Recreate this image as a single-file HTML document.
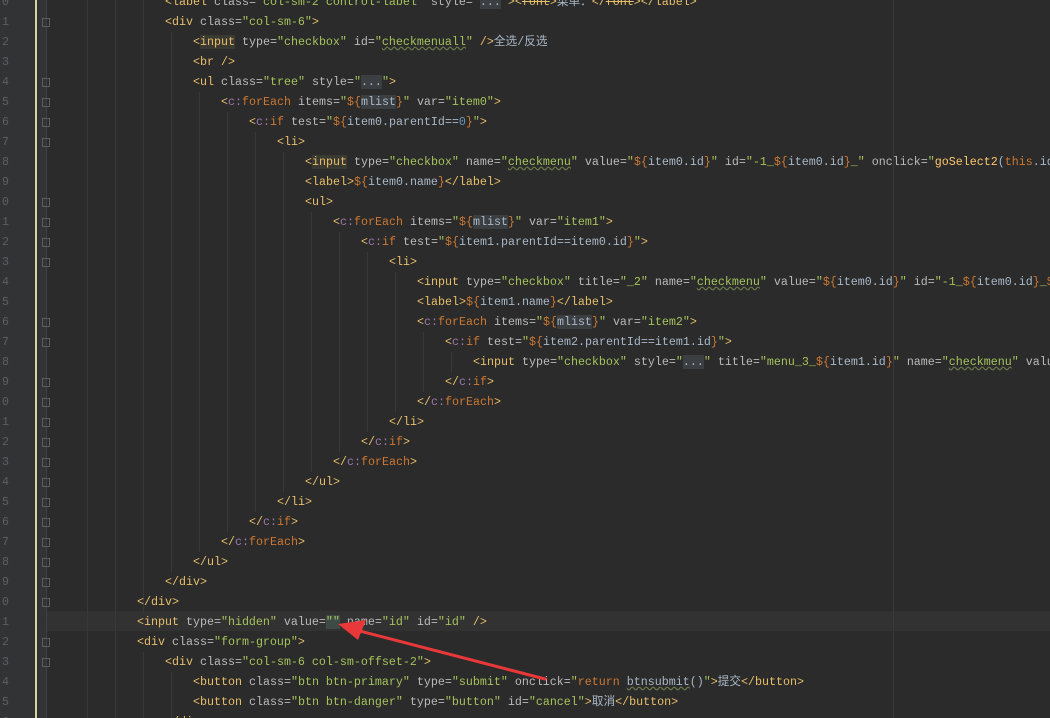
<!DOCTYPE html>
<html><head><meta charset="utf-8"><style>
html,body{margin:0;padding:0;background:#2b2b2b;width:1050px;height:718px;overflow:hidden}
#w{position:relative;width:1050px;height:718px;overflow:hidden}
#g{position:absolute;left:0;top:0;width:35px;height:718px;background:#313335}
#y{position:absolute;left:35px;top:0;width:2px;height:718px;background:#d6d69c}
#g2{position:absolute;left:37px;top:0;width:9px;height:718px;background:#313335;border-right:1px solid #3e4042}
.ln{position:absolute;left:2px;font:11.67px "Liberation Mono",monospace;color:#5c6064;height:20px;line-height:20px}
.l{position:absolute;white-space:pre;font:11.67px "Liberation Mono","Noto Sans CJK SC",monospace;height:20px;line-height:20px;color:#bababa}
.gd{position:absolute;width:1px;background:#383838}
.t{color:#e8bf6a}.a{color:#bababa}.s{color:#a5c25c}.e{color:#cc7832}.v{color:#a9b7c6}.p{color:#9876aa}.k{color:#cc7832}.n{color:#6897bb}.z{color:#a9b7c6}.f{color:#ffc66d}
.hb{background:#3b3a32}.hm{background:#3c3f41}.u{text-decoration:underline wavy #6a7a4a}
#cur{position:absolute;left:47px;top:611px;width:1003px;height:20px;background:#323232}
#rm{position:absolute;left:893px;top:0;width:1px;height:718px;background:#3a3a3a}
.fd{position:absolute;left:42px;width:6px;height:7px;border:1px solid #5a5d60}
</style></head><body><div id="w">
<div id="cur"></div>
<div id="rm"></div>
<div id="g"></div><div id="y"></div><div id="g2"></div>
<div class="gd" style="left:87px;top:0;height:718px"></div>
<div class="gd" style="left:115px;top:0;height:718px"></div>
<div class="gd" style="left:143px;top:0;height:612px"></div>
<div class="gd" style="left:171px;top:32px;height:540px"></div>
<div class="gd" style="left:199px;top:92px;height:460px"></div>
<div class="gd" style="left:227px;top:112px;height:420px"></div>
<div class="gd" style="left:255px;top:132px;height:380px"></div>
<div class="gd" style="left:283px;top:152px;height:340px"></div>
<div class="gd" style="left:311px;top:212px;height:260px"></div>
<div class="gd" style="left:339px;top:232px;height:220px"></div>
<div class="gd" style="left:367px;top:252px;height:180px"></div>
<div class="gd" style="left:395px;top:272px;height:140px"></div>
<div class="gd" style="left:423px;top:332px;height:60px"></div>
<div class="gd" style="left:451px;top:352px;height:20px"></div>
<div class="gd" style="left:143px;top:652px;height:66px"></div>
<div class="gd" style="left:171px;top:672px;height:46px"></div>

<div class="ln" style="top:-8px">0</div><div class="ln" style="top:12px">1</div><div class="ln" style="top:32px">2</div><div class="ln" style="top:52px">3</div><div class="ln" style="top:72px">4</div><div class="ln" style="top:92px">5</div><div class="ln" style="top:112px">6</div><div class="ln" style="top:132px">7</div><div class="ln" style="top:152px">8</div><div class="ln" style="top:172px">9</div><div class="ln" style="top:192px">0</div><div class="ln" style="top:212px">1</div><div class="ln" style="top:232px">2</div><div class="ln" style="top:252px">3</div><div class="ln" style="top:272px">4</div><div class="ln" style="top:292px">5</div><div class="ln" style="top:312px">6</div><div class="ln" style="top:332px">7</div><div class="ln" style="top:352px">8</div><div class="ln" style="top:372px">9</div><div class="ln" style="top:392px">0</div><div class="ln" style="top:412px">1</div><div class="ln" style="top:432px">2</div><div class="ln" style="top:452px">3</div><div class="ln" style="top:472px">4</div><div class="ln" style="top:492px">5</div><div class="ln" style="top:512px">6</div><div class="ln" style="top:532px">7</div><div class="ln" style="top:552px">8</div><div class="ln" style="top:572px">9</div><div class="ln" style="top:592px">0</div><div class="ln" style="top:612px">1</div><div class="ln" style="top:632px">2</div><div class="ln" style="top:652px">3</div><div class="ln" style="top:672px">4</div><div class="ln" style="top:692px">5</div><div class="ln" style="top:712px">6</div>

<div class="fd" style="top:18px"></div><div class="fd" style="top:78px"></div><div class="fd" style="top:98px"></div><div class="fd" style="top:118px"></div><div class="fd" style="top:138px"></div><div class="fd" style="top:198px"></div><div class="fd" style="top:218px"></div><div class="fd" style="top:238px"></div><div class="fd" style="top:258px"></div><div class="fd" style="top:318px"></div><div class="fd" style="top:338px"></div><div class="fd" style="top:378px"></div><div class="fd" style="top:398px"></div><div class="fd" style="top:418px"></div><div class="fd" style="top:438px"></div><div class="fd" style="top:458px"></div><div class="fd" style="top:478px"></div><div class="fd" style="top:498px"></div><div class="fd" style="top:518px"></div><div class="fd" style="top:538px"></div><div class="fd" style="top:558px"></div><div class="fd" style="top:578px"></div><div class="fd" style="top:598px"></div><div class="fd" style="top:638px"></div><div class="fd" style="top:658px"></div>

<div class="l" style="left:165px;top:-8px"><span class="t">&lt;label </span><span class="a">class=</span><span class="s">"col-sm-2 control-label"</span> <span class="a">style=</span><span class="s">"</span><span class="hm z">...</span><span class="s">"</span><span class="t">&gt;&lt;<s>font</s>&gt;</span><span class="z">菜单：</span><span class="t">&lt;/<s>font</s>&gt;&lt;/label&gt;</span></div>
<div class="l" style="left:165px;top:12px"><span class="t">&lt;div </span><span class="a">class=</span><span class="s">"col-sm-6"</span><span class="t">&gt;</span></div>
<div class="l" style="left:193px;top:32px"><span class="t">&lt;<span class="hb">input</span> </span><span class="a">type=</span><span class="s">"checkbox"</span> <span class="a">id=</span><span class="s">"<span class="u">checkmenuall</span>"</span> <span class="t">/&gt;</span><span class="z">全选/反选</span></div>
<div class="l" style="left:193px;top:52px"><span class="t">&lt;br /&gt;</span></div>
<div class="l" style="left:193px;top:72px"><span class="t">&lt;ul </span><span class="a">class=</span><span class="s">"tree"</span> <span class="a">style=</span><span class="s">"</span><span class="hm z">...</span><span class="s">"</span><span class="t">&gt;</span></div>
<div class="l" style="left:221px;top:92px"><span class="t">&lt;</span><span class="p">c:</span><span class="k">forEach</span> <span class="a">items=</span><span class="s">"</span><span class="e">${</span><span class="v hm">mlist</span><span class="e">}</span><span class="s">"</span> <span class="a">var=</span><span class="s">"item0"</span><span class="t">&gt;</span></div>
<div class="l" style="left:249px;top:112px"><span class="t">&lt;</span><span class="p">c:</span><span class="k">if</span> <span class="a">test=</span><span class="s">"</span><span class="e">${</span><span class="v">item0.parentId==</span><span class="n">0</span><span class="e">}</span><span class="s">"</span><span class="t">&gt;</span></div>
<div class="l" style="left:277px;top:132px"><span class="t">&lt;li&gt;</span></div>
<div class="l" style="left:305px;top:152px"><span class="t">&lt;<span class="hb">input</span> </span><span class="a">type=</span><span class="s">"checkbox"</span> <span class="a">name=</span><span class="s">"<span class="u">checkmenu</span>"</span> <span class="a">value=</span><span class="s">"</span><span class="e">${</span><span class="v">item0.id</span><span class="e">}</span><span class="s">"</span> <span class="a">id=</span><span class="s">"-1_</span><span class="e">${</span><span class="v">item0.id</span><span class="e">}</span><span class="s">_"</span> <span class="a">onclick=</span><span class="s">"</span><span class="f">goSelect2</span><span class="z">(</span><span class="k">this</span><span class="z">.id)"</span></div>
<div class="l" style="left:305px;top:172px"><span class="t">&lt;label&gt;</span><span class="e">${</span><span class="v">item0.name</span><span class="e">}</span><span class="t">&lt;/label&gt;</span></div>
<div class="l" style="left:305px;top:192px"><span class="t">&lt;ul&gt;</span></div>
<div class="l" style="left:333px;top:212px"><span class="t">&lt;</span><span class="p">c:</span><span class="k">forEach</span> <span class="a">items=</span><span class="s">"</span><span class="e">${</span><span class="v hm">mlist</span><span class="e">}</span><span class="s">"</span> <span class="a">var=</span><span class="s">"item1"</span><span class="t">&gt;</span></div>
<div class="l" style="left:361px;top:232px"><span class="t">&lt;</span><span class="p">c:</span><span class="k">if</span> <span class="a">test=</span><span class="s">"</span><span class="e">${</span><span class="v">item1.parentId==item0.id</span><span class="e">}</span><span class="s">"</span><span class="t">&gt;</span></div>
<div class="l" style="left:389px;top:252px"><span class="t">&lt;li&gt;</span></div>
<div class="l" style="left:417px;top:272px"><span class="t">&lt;input </span><span class="a">type=</span><span class="s">"checkbox"</span> <span class="a">title=</span><span class="s">"_2"</span> <span class="a">name=</span><span class="s">"<span class="u">checkmenu</span>"</span> <span class="a">value=</span><span class="s">"</span><span class="e">${</span><span class="v">item0.id</span><span class="e">}</span><span class="s">"</span> <span class="a">id=</span><span class="s">"-1_</span><span class="e">${</span><span class="v">item0.id</span><span class="e">}</span><span class="s">_</span><span class="e">${</span><span class="v">item1.id</span><span class="e">}</span></div>
<div class="l" style="left:417px;top:292px"><span class="t">&lt;label&gt;</span><span class="e">${</span><span class="v">item1.name</span><span class="e">}</span><span class="t">&lt;/label&gt;</span></div>
<div class="l" style="left:417px;top:312px"><span class="t">&lt;</span><span class="p">c:</span><span class="k">forEach</span> <span class="a">items=</span><span class="s">"</span><span class="e">${</span><span class="v hm">mlist</span><span class="e">}</span><span class="s">"</span> <span class="a">var=</span><span class="s">"item2"</span><span class="t">&gt;</span></div>
<div class="l" style="left:445px;top:332px"><span class="t">&lt;</span><span class="p">c:</span><span class="k">if</span> <span class="a">test=</span><span class="s">"</span><span class="e">${</span><span class="v">item2.parentId==item1.id</span><span class="e">}</span><span class="s">"</span><span class="t">&gt;</span></div>
<div class="l" style="left:473px;top:352px"><span class="t">&lt;input </span><span class="a">type=</span><span class="s">"checkbox"</span> <span class="a">style=</span><span class="s">"</span><span class="hm z">...</span><span class="s">"</span> <span class="a">title=</span><span class="s">"menu_3_</span><span class="e">${</span><span class="v">item1.id</span><span class="e">}</span><span class="s">"</span> <span class="a">name=</span><span class="s">"<span class="u">checkmenu</span>"</span> <span class="a">value</span></div>
<div class="l" style="left:445px;top:372px"><span class="t">&lt;/</span><span class="p">c:</span><span class="k">if</span><span class="t">&gt;</span></div>
<div class="l" style="left:417px;top:392px"><span class="t">&lt;/</span><span class="p">c:</span><span class="k">forEach</span><span class="t">&gt;</span></div>
<div class="l" style="left:389px;top:412px"><span class="t">&lt;/li&gt;</span></div>
<div class="l" style="left:361px;top:432px"><span class="t">&lt;/</span><span class="p">c:</span><span class="k">if</span><span class="t">&gt;</span></div>
<div class="l" style="left:333px;top:452px"><span class="t">&lt;/</span><span class="p">c:</span><span class="k">forEach</span><span class="t">&gt;</span></div>
<div class="l" style="left:305px;top:472px"><span class="t">&lt;/ul&gt;</span></div>
<div class="l" style="left:277px;top:492px"><span class="t">&lt;/li&gt;</span></div>
<div class="l" style="left:249px;top:512px"><span class="t">&lt;/</span><span class="p">c:</span><span class="k">if</span><span class="t">&gt;</span></div>
<div class="l" style="left:221px;top:532px"><span class="t">&lt;/</span><span class="p">c:</span><span class="k">forEach</span><span class="t">&gt;</span></div>
<div class="l" style="left:193px;top:552px"><span class="t">&lt;/ul&gt;</span></div>
<div class="l" style="left:165px;top:572px"><span class="t">&lt;/div&gt;</span></div>
<div class="l" style="left:137px;top:592px"><span class="t">&lt;/div&gt;</span></div>
<div class="l" style="left:137px;top:612px"><span class="t">&lt;input </span><span class="a">type=</span><span class="s">"hidden"</span> <span class="a">value=</span><span class="s" style="background:#3d4a45">""</span> <span class="a">name=</span><span class="s">"id"</span> <span class="a">id=</span><span class="s">"id"</span> <span class="t">/&gt;</span></div>
<div class="l" style="left:137px;top:632px"><span class="t">&lt;div </span><span class="a">class=</span><span class="s">"form-group"</span><span class="t">&gt;</span></div>
<div class="l" style="left:165px;top:652px"><span class="t">&lt;div </span><span class="a">class=</span><span class="s">"col-sm-6 col-sm-offset-2"</span><span class="t">&gt;</span></div>
<div class="l" style="left:193px;top:672px"><span class="t">&lt;button </span><span class="a">class=</span><span class="s">"btn btn-primary"</span> <span class="a">type=</span><span class="s">"submit"</span> <span class="a">onclick=</span><span class="s">"</span><span class="k">return </span><span class="z u">btnsubmit</span><span class="z">()</span><span class="s">"</span><span class="t">&gt;</span><span class="z">提交</span><span class="t">&lt;/button&gt;</span></div>
<div class="l" style="left:193px;top:692px"><span class="t">&lt;button </span><span class="a">class=</span><span class="s">"btn btn-danger"</span> <span class="a">type=</span><span class="s">"button"</span> <span class="a">id=</span><span class="s">"cancel"</span><span class="t">&gt;</span><span class="z">取消</span><span class="t">&lt;/button&gt;</span></div>
<div class="l" style="left:165px;top:712px"><span class="t">&lt;/div&gt;</span></div>

<svg style="position:absolute;left:0;top:0" width="1050" height="718">
<line x1="545" y1="679" x2="356" y2="630" stroke="#e8383a" stroke-width="3" stroke-linecap="round"/>
<polygon points="338,624 366,620 358,640" fill="#e8383a"/>
</svg>
</div></body></html>
